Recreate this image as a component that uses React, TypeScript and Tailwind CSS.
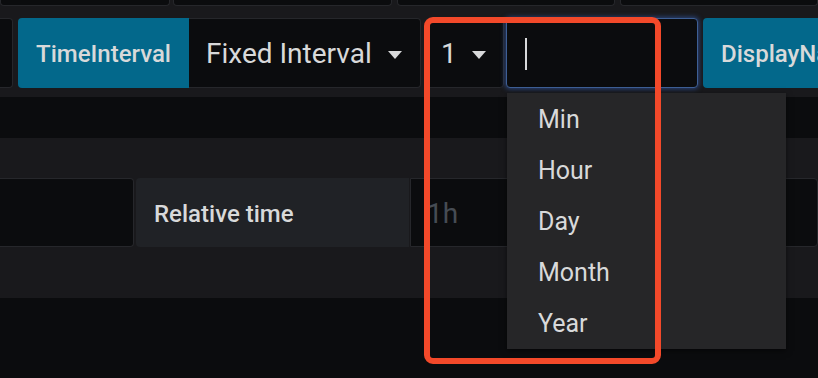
import { useState } from 'react';

const units = ['Min', 'Hour', 'Day', 'Month', 'Year'];

function Caret({ className = '' }: { className?: string }) {
  return (
    <svg width="14" height="8" viewBox="0 0 14 8" className={className}>
      <path d="M0 0 L14 0 L7 8 Z" fill="#d8d9da" />
    </svg>
  );
}

export default function App() {
  const [unit] = useState('');

  return (
    <div
      className="relative w-[818px] h-[378px] overflow-hidden bg-[#0b0c0e] text-[#d8d9da]"
      style={{ fontFamily: 'Roboto, "Liberation Sans", sans-serif' }}
    >
      {/* upper form band */}
      <div className="h-[97px] bg-[#19191c]">
        <div className="flex h-[6px]">
          <div className="w-[170px] rounded-b border border-t-0 border-[#26272b] bg-[#0b0c0e]" />
          <div className="ml-[3px] w-[219px] rounded-b border border-t-0 border-[#26272b] bg-[#0b0c0e]" />
          <div className="ml-[5px] w-[218px] rounded-b border border-t-0 border-[#26272b] bg-[#0b0c0e]" />
          <div className="ml-[5px] flex-1 rounded-b border border-t-0 border-[#26272b] bg-[#0b0c0e]" />
        </div>

        <div className="mt-[12px] flex h-[70px] items-stretch">
          <div className="w-[13px] shrink-0 rounded-r border border-l-0 border-[#26272b] bg-[#0b0c0e]" />
          <div className="ml-[5px] flex shrink-0 items-center rounded-l bg-[#03688b] px-[18px] pt-[2px] text-[24px] font-medium">
            TimeInterval
          </div>
          <div className="flex w-[232px] shrink-0 items-center rounded-r border border-l-0 border-[#26272b] bg-[#0b0c0e] pl-[17px] pt-[2px] text-[28px]">
            <span>Fixed Interval</span>
            <Caret className="ml-[16px] mt-[2px]" />
          </div>
          <div className="ml-[4px] flex w-[79px] shrink-0 items-center rounded border border-[#26272b] bg-[#0b0c0e] pl-[15px] pt-[2px] text-[28px]">
            <span>1</span>
            <Caret className="ml-[15px] mt-[2px]" />
          </div>
          <div className="ml-[2px] flex w-[192px] shrink-0 items-center rounded border border-[#3e5f95] bg-[#0b0c0e] pl-[18px] pt-[2px] shadow-[0_0_5px_1px_rgba(61,113,217,0.5)]">
            <span className="h-[32px] w-[2px] bg-[#d8d9da]">{unit}</span>
          </div>
          <div className="ml-[5px] flex shrink-0 items-center whitespace-nowrap rounded bg-[#03688b] px-[18px] pt-[2px] text-[24px] font-medium">
            DisplayName
          </div>
        </div>
      </div>

      <div className="h-[41px]" />

      {/* lower form band */}
      <div className="h-[160px] bg-[#19191c] pt-[40px]">
        <div className="flex h-[69px] items-stretch">
          <div className="w-[134px] shrink-0 rounded-r border border-l-0 border-[#26272b] bg-[#0b0c0e]" />
          <div className="ml-[2px] flex w-[273px] shrink-0 items-center rounded-l bg-[#202226] pl-[18px] pt-[2px] text-[24px] font-medium">
            Relative time
          </div>
          <div className="ml-[1px] flex flex-1 items-center rounded-r border border-[#26272b] bg-[#0b0c0e] pl-[16px] pt-[2px] text-[28px] text-[#464c54]">
            1h
          </div>
        </div>
      </div>

      {/* dropdown menu */}
      <div className="absolute left-[507px] top-[93px] w-[279px] bg-[#262628] pt-[1px] shadow-[0_2px_6px_rgba(0,0,0,0.5)]">
        {units.map((u) => (
          <div key={u} className="flex h-[51px] items-center pl-[31px] text-[25px]">
            {u}
          </div>
        ))}
      </div>

      {/* annotation highlight */}
      <div className="pointer-events-none absolute left-[424px] top-[17px] h-[347px] w-[237px] rounded-[9px] border-[6px] border-[#f3492a]" />
    </div>
  );
}
